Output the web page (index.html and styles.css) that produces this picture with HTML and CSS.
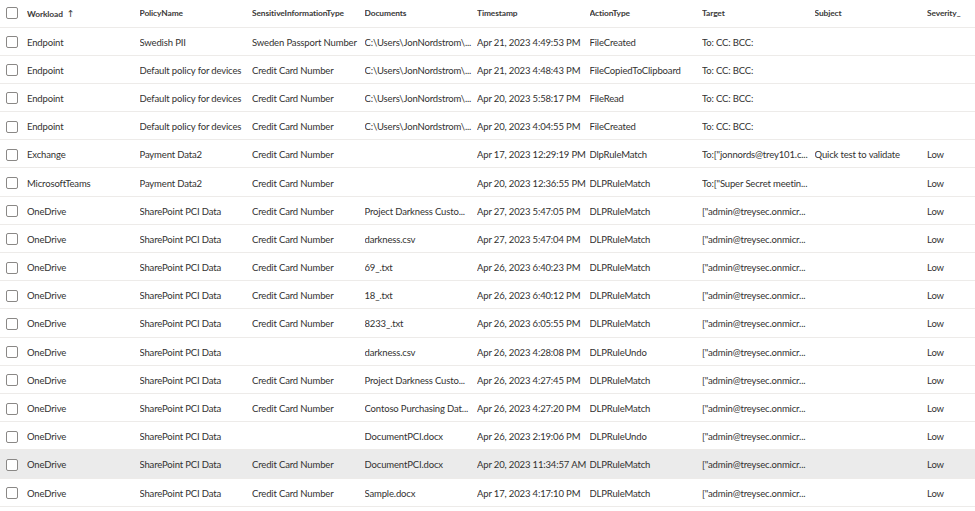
FILE: index.html
```html
<!DOCTYPE html>
<html>
<head>
<meta charset="utf-8">
<link rel="stylesheet" href="styles.css">
</head>
<body>
<div class="table">
  <div class="row head">
    <div class="c chk"><span class="cb"></span></div>
    <div class="c">Workload <span class="arrow">↑</span></div>
    <div class="c">PolicyName</div>
    <div class="c">SensitiveInformationType</div>
    <div class="c">Documents</div>
    <div class="c">Timestamp</div>
    <div class="c">ActionType</div>
    <div class="c">Target</div>
    <div class="c">Subject</div>
    <div class="c">Severity_</div>
  </div>
  <div class="row">
    <div class="c chk"><span class="cb"></span></div>
    <div class="c">Endpoint</div><div class="c">Swedish PII</div><div class="c">Sweden Passport Number</div><div class="c">C:\Users\JonNordstrom\...</div><div class="c">Apr 21, 2023 4:49:53 PM</div><div class="c">FileCreated</div><div class="c">To: CC: BCC:</div><div class="c"></div><div class="c"></div>
  </div>
  <div class="row">
    <div class="c chk"><span class="cb"></span></div>
    <div class="c">Endpoint</div><div class="c">Default policy for devices</div><div class="c">Credit Card Number</div><div class="c">C:\Users\JonNordstrom\...</div><div class="c">Apr 21, 2023 4:48:43 PM</div><div class="c">FileCopiedToClipboard</div><div class="c">To: CC: BCC:</div><div class="c"></div><div class="c"></div>
  </div>
  <div class="row">
    <div class="c chk"><span class="cb"></span></div>
    <div class="c">Endpoint</div><div class="c">Default policy for devices</div><div class="c">Credit Card Number</div><div class="c">C:\Users\JonNordstrom\...</div><div class="c">Apr 20, 2023 5:58:17 PM</div><div class="c">FileRead</div><div class="c">To: CC: BCC:</div><div class="c"></div><div class="c"></div>
  </div>
  <div class="row">
    <div class="c chk"><span class="cb"></span></div>
    <div class="c">Endpoint</div><div class="c">Default policy for devices</div><div class="c">Credit Card Number</div><div class="c">C:\Users\JonNordstrom\...</div><div class="c">Apr 20, 2023 4:04:55 PM</div><div class="c">FileCreated</div><div class="c">To: CC: BCC:</div><div class="c"></div><div class="c"></div>
  </div>
  <div class="row">
    <div class="c chk"><span class="cb"></span></div>
    <div class="c">Exchange</div><div class="c">Payment Data2</div><div class="c">Credit Card Number</div><div class="c"></div><div class="c">Apr 17, 2023 12:29:19 PM</div><div class="c">DlpRuleMatch</div><div class="c">To:["jonnords@trey101.c...</div><div class="c">Quick test to validate</div><div class="c">Low</div>
  </div>
  <div class="row">
    <div class="c chk"><span class="cb"></span></div>
    <div class="c">MicrosoftTeams</div><div class="c">Payment Data2</div><div class="c">Credit Card Number</div><div class="c"></div><div class="c">Apr 20, 2023 12:36:55 PM</div><div class="c">DLPRuleMatch</div><div class="c">To:["Super Secret meetin...</div><div class="c"></div><div class="c">Low</div>
  </div>
  <div class="row">
    <div class="c chk"><span class="cb"></span></div>
    <div class="c">OneDrive</div><div class="c">SharePoint PCI Data</div><div class="c">Credit Card Number</div><div class="c">Project Darkness Custo...</div><div class="c">Apr 27, 2023 5:47:05 PM</div><div class="c">DLPRuleMatch</div><div class="c">["admin@treysec.onmicr...</div><div class="c"></div><div class="c">Low</div>
  </div>
  <div class="row">
    <div class="c chk"><span class="cb"></span></div>
    <div class="c">OneDrive</div><div class="c">SharePoint PCI Data</div><div class="c">Credit Card Number</div><div class="c">darkness.csv</div><div class="c">Apr 27, 2023 5:47:04 PM</div><div class="c">DLPRuleMatch</div><div class="c">["admin@treysec.onmicr...</div><div class="c"></div><div class="c">Low</div>
  </div>
  <div class="row">
    <div class="c chk"><span class="cb"></span></div>
    <div class="c">OneDrive</div><div class="c">SharePoint PCI Data</div><div class="c">Credit Card Number</div><div class="c">69_.txt</div><div class="c">Apr 26, 2023 6:40:23 PM</div><div class="c">DLPRuleMatch</div><div class="c">["admin@treysec.onmicr...</div><div class="c"></div><div class="c">Low</div>
  </div>
  <div class="row">
    <div class="c chk"><span class="cb"></span></div>
    <div class="c">OneDrive</div><div class="c">SharePoint PCI Data</div><div class="c">Credit Card Number</div><div class="c">18_.txt</div><div class="c">Apr 26, 2023 6:40:12 PM</div><div class="c">DLPRuleMatch</div><div class="c">["admin@treysec.onmicr...</div><div class="c"></div><div class="c">Low</div>
  </div>
  <div class="row">
    <div class="c chk"><span class="cb"></span></div>
    <div class="c">OneDrive</div><div class="c">SharePoint PCI Data</div><div class="c">Credit Card Number</div><div class="c">8233_.txt</div><div class="c">Apr 26, 2023 6:05:55 PM</div><div class="c">DLPRuleMatch</div><div class="c">["admin@treysec.onmicr...</div><div class="c"></div><div class="c">Low</div>
  </div>
  <div class="row">
    <div class="c chk"><span class="cb"></span></div>
    <div class="c">OneDrive</div><div class="c">SharePoint PCI Data</div><div class="c"></div><div class="c">darkness.csv</div><div class="c">Apr 26, 2023 4:28:08 PM</div><div class="c">DLPRuleUndo</div><div class="c">["admin@treysec.onmicr...</div><div class="c"></div><div class="c">Low</div>
  </div>
  <div class="row">
    <div class="c chk"><span class="cb"></span></div>
    <div class="c">OneDrive</div><div class="c">SharePoint PCI Data</div><div class="c">Credit Card Number</div><div class="c">Project Darkness Custo...</div><div class="c">Apr 26, 2023 4:27:45 PM</div><div class="c">DLPRuleMatch</div><div class="c">["admin@treysec.onmicr...</div><div class="c"></div><div class="c">Low</div>
  </div>
  <div class="row">
    <div class="c chk"><span class="cb"></span></div>
    <div class="c">OneDrive</div><div class="c">SharePoint PCI Data</div><div class="c">Credit Card Number</div><div class="c">Contoso Purchasing Dat...</div><div class="c">Apr 26, 2023 4:27:20 PM</div><div class="c">DLPRuleMatch</div><div class="c">["admin@treysec.onmicr...</div><div class="c"></div><div class="c">Low</div>
  </div>
  <div class="row">
    <div class="c chk"><span class="cb"></span></div>
    <div class="c">OneDrive</div><div class="c">SharePoint PCI Data</div><div class="c"></div><div class="c">DocumentPCI.docx</div><div class="c">Apr 26, 2023 2:19:06 PM</div><div class="c">DLPRuleUndo</div><div class="c">["admin@treysec.onmicr...</div><div class="c"></div><div class="c">Low</div>
  </div>
  <div class="row hl">
    <div class="c chk"><span class="cb"></span></div>
    <div class="c">OneDrive</div><div class="c">SharePoint PCI Data</div><div class="c">Credit Card Number</div><div class="c">DocumentPCI.docx</div><div class="c">Apr 20, 2023 11:34:57 AM</div><div class="c">DLPRuleMatch</div><div class="c">["admin@treysec.onmicr...</div><div class="c"></div><div class="c">Low</div>
  </div>
  <div class="row">
    <div class="c chk"><span class="cb"></span></div>
    <div class="c">OneDrive</div><div class="c">SharePoint PCI Data</div><div class="c">Credit Card Number</div><div class="c">Sample.docx</div><div class="c">Apr 17, 2023 4:17:10 PM</div><div class="c">DLPRuleMatch</div><div class="c">["admin@treysec.onmicr...</div><div class="c"></div><div class="c">Low</div>
  </div>
</div>
</body>
</html>
```

FILE: styles.css
```css
html, body {
  margin: 0;
  padding: 0;
  background: #ffffff;
}
body {
  font-family: Lato, "Liberation Sans", sans-serif;
  font-size: 9.5px;
  letter-spacing: -0.15px;
  color: #323130;
  width: 975px;
  height: 511px;
  overflow: hidden;
}
.table {
  display: flex;
  flex-direction: column;
}
.row {
  display: grid;
  grid-template-columns: 27px repeat(8, 112.5px) 1fr;
  height: 28.2px;
  box-sizing: border-box;
  border-bottom: 1px solid #edebe9;
  align-items: center;
  padding-top: 2px;
}
.row.head {
  height: 27.5px;
  font-weight: 700;
  font-size: 8.4px;
  letter-spacing: -0.1px;
  padding-top: 0;
  color: #3b3a39;
}
.row.hl {
  background: #ebebeb;
}
.c {
  white-space: nowrap;
  overflow: hidden;
}
.chk {
  display: flex;
  align-items: center;
  padding-left: 6px;
}
.cb {
  width: 12px;
  height: 12px;
  box-sizing: border-box;
  border: 1px solid #8a8886;
  border-radius: 2px;
  background: #fff;
}
.arrow {
  font-weight: 400;
  margin-left: 2px;
  font-family: "DejaVu Sans", sans-serif;
  font-size: 9.5px;
}
```
